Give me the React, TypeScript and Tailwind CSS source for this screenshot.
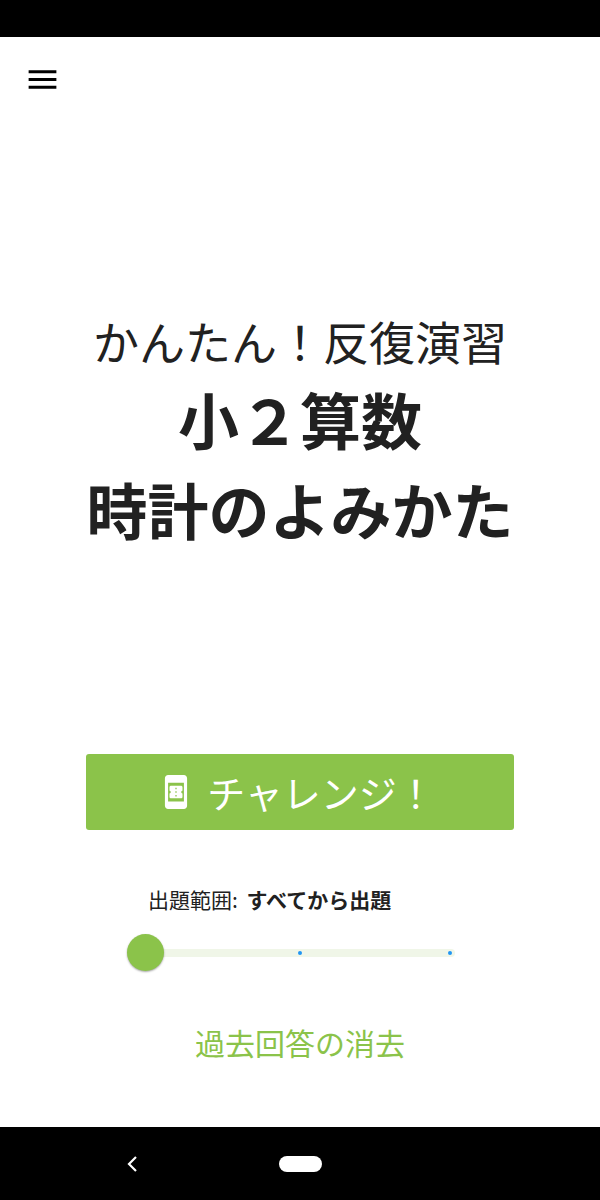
import { useState } from "react";

const ranges = ["すべてから出題", "間違えた問題から出題", "未回答から出題"];

function MenuIcon() {
  return (
    <svg viewBox="0 0 24 24" className="size-[37px]" fill="currentColor" aria-hidden="true">
      <path d="M3 18h18v-2H3v2zm0-5h18v-2H3v2zm0-7v2h18V6H3z" />
    </svg>
  );
}

function TicketPhoneIcon() {
  return (
    <svg viewBox="0 0 24 24" className="size-[38px]" fill="currentColor" aria-hidden="true">
      <path
        fillRule="evenodd"
        d="M17 1.3H7c-1.1 0-2 .9-2 2v17.4c0 1.1.9 2 2 2h10c1.1 0 2-.9 2-2V3.3c0-1.1-.9-2-2-2zM7 6.2h10v11.8H7z"
      />
      <path
        fillRule="evenodd"
        d="M16.1 11.2V9c0-.55-.45-.9-1-.9H8.9c-.55 0-1 .35-1 .9v2.2c.45 0 .8.4.8.85s-.35.85-.8.85v2.2c0 .55.45.9 1 .9h6.2c.55 0 1-.35 1-.9v-2.2c-.45 0-.8-.4-.8-.85s.35-.85.8-.85zm-3.7 3.6h-.8v-.9h.8zm0-2.3h-.8v-.9h.8zm0-2.3h-.8v-.9h.8z"
      />
    </svg>
  );
}

export default function App() {
  const [range, setRange] = useState(0);

  return (
    <div className="flex min-h-screen flex-col bg-white font-['Noto_Sans_CJK_JP',sans-serif] text-[#212121]">
      <div className="h-[37px] bg-black" />

      <header className="flex h-[84px] items-center px-6 text-black">
        <button type="button" aria-label="メニュー">
          <MenuIcon />
        </button>
      </header>

      <main className="flex flex-1 flex-col items-center">
        <h1 className="flex flex-1 flex-col justify-center pb-4 text-center whitespace-nowrap">
          <span className="text-[46px] leading-[68px] font-normal">かんたん！反復演習</span>
          <span className="text-[61px] leading-[90px] font-bold">小２算数</span>
          <span className="text-[61px] leading-[90px] font-bold">時計のよみかた</span>
        </h1>

        <button
          type="button"
          className="flex w-full max-w-[428px] items-center justify-center gap-3 rounded-[3px] bg-[#8bc34a] py-2.5 pr-2 text-[38px] leading-[56px] text-white"
        >
          <TicketPhoneIcon />
          チャレンジ！
        </button>

        <div className="mt-[54px] flex w-full max-w-[346px] flex-col">
          <label htmlFor="range" className="pl-[21px] text-[21px] leading-[30px]">
            出題範囲: <strong className="ml-1 font-bold">{ranges[range]}</strong>
          </label>
          <div className="relative mt-5 h-[37px]">
            <div className="absolute inset-x-[18px] top-[15px] flex h-2 items-center justify-between rounded-sm bg-[#f0f6e8] px-[3px]">
              <span className="size-1 rounded-full bg-[#2196f3]" />
              <span className="size-1 rounded-full bg-[#2196f3]" />
              <span className="size-1 rounded-full bg-[#2196f3]" />
            </div>
            <input
              id="range"
              type="range"
              min={0}
              max={2}
              step={1}
              value={range}
              onChange={(e) => setRange(Number(e.target.value))}
              className="relative block h-[37px] w-full appearance-none bg-transparent [&::-webkit-slider-thumb]:size-[37px] [&::-webkit-slider-thumb]:appearance-none [&::-webkit-slider-thumb]:rounded-full [&::-webkit-slider-thumb]:bg-[#8bc34a] [&::-webkit-slider-thumb]:shadow-[0_1px_2px_rgba(0,0,0,0.35)]"
            />
          </div>
        </div>

        <button type="button" className="mt-12 mb-[62px] text-[30px] leading-[46px] text-[#8bc34a]">
          過去回答の消去
        </button>
      </main>

      <nav className="grid h-[73px] grid-cols-3 items-center justify-items-center bg-black px-12 text-white">
        <button type="button" aria-label="戻る">
          <svg viewBox="0 0 10 16" className="h-4 w-[10px]" fill="none" stroke="currentColor" strokeWidth="2.2" aria-hidden="true">
            <path d="M9 1L2 8l7 7" />
          </svg>
        </button>
        <button type="button" aria-label="ホーム" className="h-4 w-[43px] rounded-full bg-white" />
      </nav>
    </div>
  );
}
